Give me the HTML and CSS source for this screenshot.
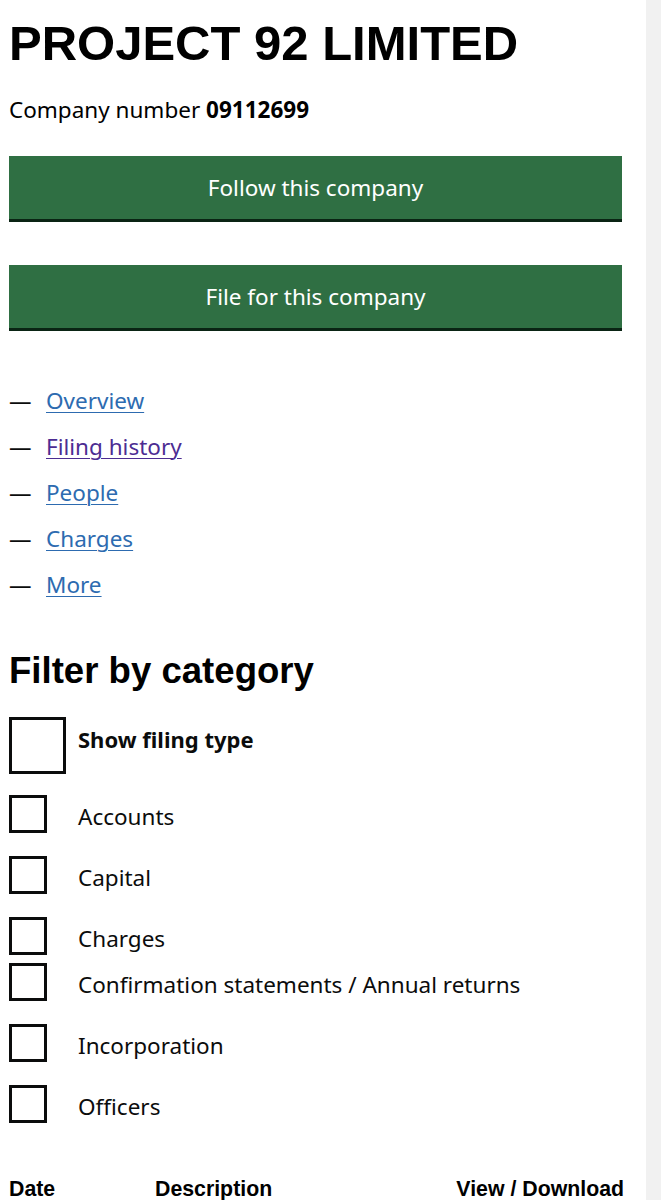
FILE: index.html
```html
<!DOCTYPE html>
<html lang="en">
<head>
<meta charset="utf-8">
<title>PROJECT 92 LIMITED - Filing history</title>
<link rel="stylesheet" href="styles.css">
</head>
<body>
<div class="page">
  <main class="main">
    <h1 class="company-name">PROJECT 92 LIMITED</h1>
    <p class="company-number">Company number <strong>09112699</strong></p>

    <a class="button" href="#">Follow this company</a>
    <a class="button button-second" href="#">File for this company</a>

    <ul class="nav">
      <li class="nav-item"><span class="dash">—</span><a class="link" href="#">Overview</a></li>
      <li class="nav-item"><span class="dash">—</span><a class="link link-visited" href="#">Filing history</a></li>
      <li class="nav-item"><span class="dash">—</span><a class="link" href="#">People</a></li>
      <li class="nav-item"><span class="dash">—</span><a class="link" href="#">Charges</a></li>
      <li class="nav-item"><span class="dash">—</span><a class="link" href="#">More</a></li>
    </ul>

    <h2 class="filter-title">Filter by category</h2>

    <div class="checks">
      <label class="check check-main"><span class="box box-big"></span><span class="check-label check-label-bold">Show filing type</span></label>
      <label class="check"><span class="box"></span><span class="check-label">Accounts</span></label>
      <label class="check"><span class="box"></span><span class="check-label">Capital</span></label>
      <label class="check check-tight"><span class="box"></span><span class="check-label">Charges</span></label>
      <label class="check"><span class="box"></span><span class="check-label">Confirmation statements / Annual returns</span></label>
      <label class="check"><span class="box"></span><span class="check-label">Incorporation</span></label>
      <label class="check"><span class="box"></span><span class="check-label">Officers</span></label>
    </div>

    <div class="table-head">
      <span class="th th-date">Date</span>
      <span class="th th-desc">Description</span>
      <span class="th th-view">View / Download</span>
    </div>
  </main>
  <div class="rail"></div>
</div>
</body>
</html>
```

FILE: styles.css
```css
html, body {
  margin: 0;
  padding: 0;
  background: #ffffff;
}

body {
  font-family: "Noto Sans", "Open Sans", Arial, sans-serif;
  color: #0b0c0c;
}

.page {
  display: flex;
  min-height: 1200px;
}

.main {
  flex: 1;
  padding: 0 22px 0 9px;
}

.rail {
  width: 15px;
  background: #f1f1f1;
}

.company-name {
  font-family: "Liberation Sans", Arial, sans-serif;
  font-weight: 700;
  font-size: 49px;
  line-height: 59px;
  margin: 14px 0 0;
  color: #000;
}

.company-number {
  font-size: 22.5px;
  line-height: 28px;
  margin: 23px 0 0;
  color: #000;
}

.company-number strong {
  font-weight: 700;
}

.button {
  display: flex;
  align-items: center;
  justify-content: center;
  height: 63px;
  margin: 32px 2px 0 0;
  background: #2f6f43;
  box-shadow: 0 3px 0 #0a2414;
  color: #ffffff;
  font-size: 22.5px;
  text-decoration: none;
}

.button-second {
  margin-top: 46px;
}

.nav {
  list-style: none;
  margin: 56px 0 0;
  padding: 0;
  display: flex;
  flex-direction: column;
  gap: 16px;
}

.nav-item {
  display: flex;
  align-items: center;
  height: 30px;
  font-size: 22.5px;
  transform: translateY(1px);
}

.dash {
  width: 37px;
  color: #0b0c0c;
}

.link {
  color: #2d6bb0;
  text-decoration: underline;
  text-decoration-thickness: 1px;
  text-underline-offset: 3px;
}

.link-visited {
  color: #4c2c92;
}

.filter-title {
  font-family: "Liberation Sans", Arial, sans-serif;
  font-weight: 700;
  font-size: 36.6px;
  line-height: 44px;
  margin: 51px 0 0;
  color: #000;
}

.checks {
  display: flex;
  flex-direction: column;
  margin-top: 24px;
}

.check {
  display: flex;
  align-items: center;
  margin-bottom: 23px;
}

.check-main {
  margin-bottom: 21px;
}

.check-tight {
  margin-bottom: 8px;
}

.box {
  box-sizing: border-box;
  width: 38px;
  height: 38px;
  border: 3px solid #0b0c0c;
  flex: none;
  margin-right: 31px;
}

.box-big {
  width: 57px;
  height: 57px;
  margin-right: 12px;
}

.check-label {
  font-size: 22.5px;
  line-height: 30px;
  padding-top: 6px;
  color: #0b0c0c;
}

.check-label-bold {
  font-weight: 700;
  font-size: 22px;
  padding-top: 0;
  padding-bottom: 14px;
}

.table-head {
  display: flex;
  margin-top: 31px;
  font-family: "Liberation Sans", Arial, sans-serif;
  font-weight: 700;
  font-size: 21.3px;
  line-height: 24px;
  color: #000;
}

.th-date {
  width: 146px;
}

.th-desc {
  flex: 1;
}

.th-view {
  text-align: right;
}
```
